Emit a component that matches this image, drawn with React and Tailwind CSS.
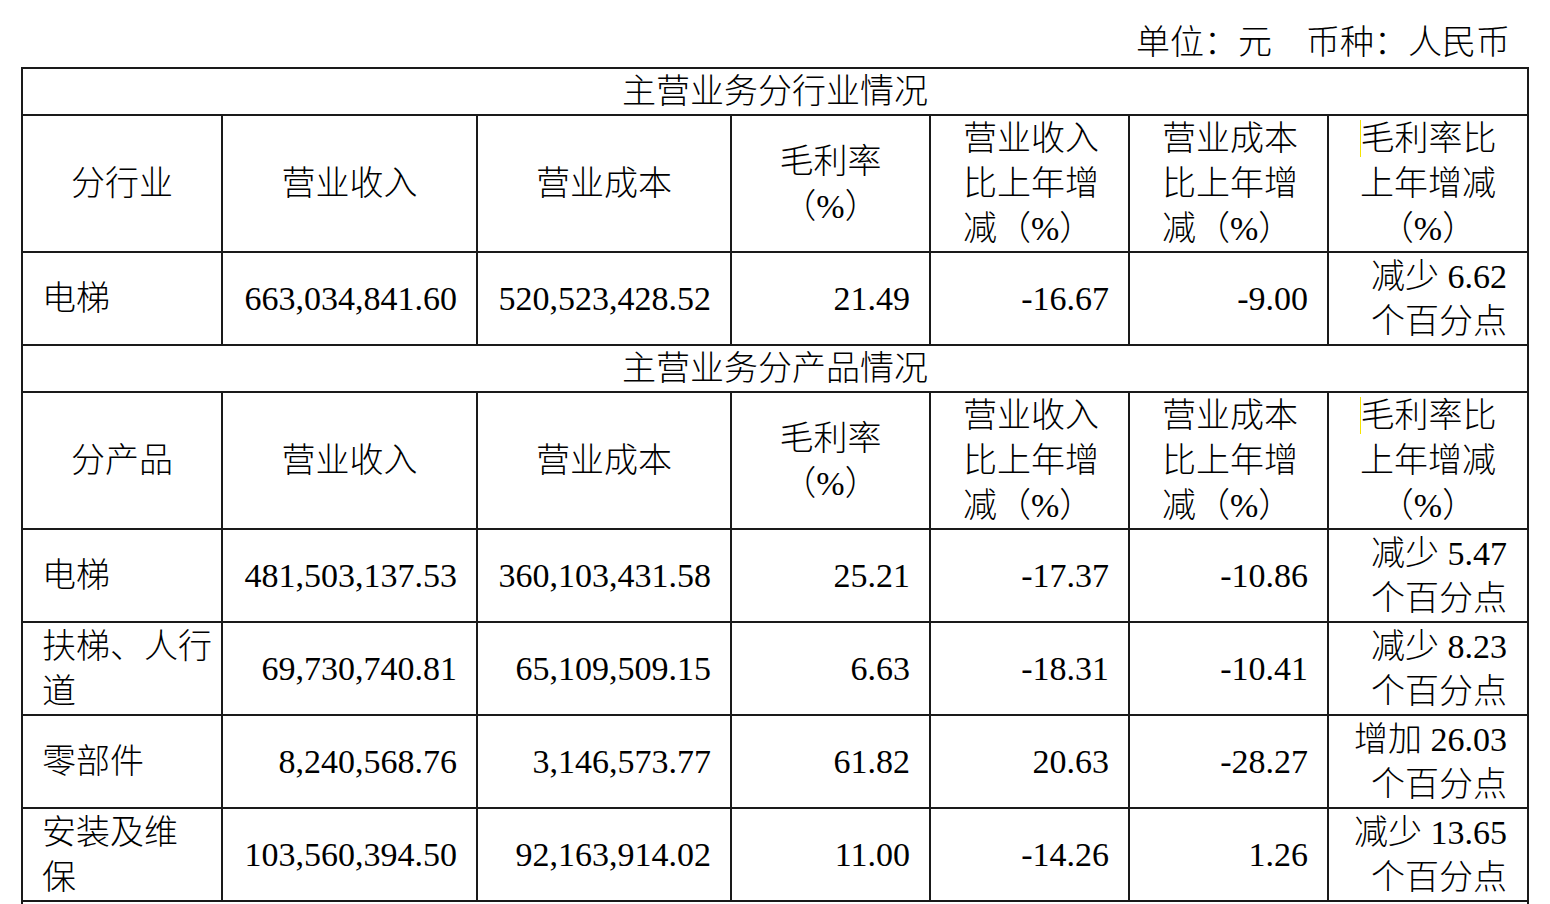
import React from "react";

const industryRows = [
  { name: ["电梯"], rev: "663,034,841.60", cost: "520,523,428.52", gm: "21.49", revChg: "-16.67", costChg: "-9.00", gmChg: ["减少 6.62", "个百分点"] },
];

const productRows = [
  { name: ["电梯"], rev: "481,503,137.53", cost: "360,103,431.58", gm: "25.21", revChg: "-17.37", costChg: "-10.86", gmChg: ["减少 5.47", "个百分点"] },
  { name: ["扶梯、人行", "道"], rev: "69,730,740.81", cost: "65,109,509.15", gm: "6.63", revChg: "-18.31", costChg: "-10.41", gmChg: ["减少 8.23", "个百分点"] },
  { name: ["零部件"], rev: "8,240,568.76", cost: "3,146,573.77", gm: "61.82", revChg: "20.63", costChg: "-28.27", gmChg: ["增加 26.03", "个百分点"] },
  { name: ["安装及维", "保"], rev: "103,560,394.50", cost: "92,163,914.02", gm: "11.00", revChg: "-14.26", costChg: "1.26", gmChg: ["减少 13.65", "个百分点"] },
];

const cell = "border-2 border-[#1a1a1a] p-0 align-middle";

const TitleRow = ({ children }) => (
  <tr>
    <td colSpan={7} className={`${cell} h-[47px] text-center`}>{children}</td>
  </tr>
);

const HeaderRow = ({ first }) => (
  <tr>
    <td className={`${cell} h-[137px] text-center`}>{first}</td>
    <td className={`${cell} text-center`}>营业收入</td>
    <td className={`${cell} text-center`}>营业成本</td>
    <td className={`${cell} text-center`}>
      <div>毛利率</div>
      <div>（%）</div>
    </td>
    <td className={`${cell} pl-[32px] text-left`}>
      <div>营业收入</div>
      <div>比上年增</div>
      <div>减（%）</div>
    </td>
    <td className={`${cell} pl-[32px] text-left`}>
      <div>营业成本</div>
      <div>比上年增</div>
      <div>减（%）</div>
    </td>
    <td className={`${cell} text-center`}>
      <div>
        <span className="border-l border-[#f5e400]">毛利率比</span>
      </div>
      <div>上年增减</div>
      <div>（%）</div>
    </td>
  </tr>
);

const DataRow = ({ row }) => (
  <tr>
    <td className={`${cell} h-[93px] pl-[19px] text-left`}>
      {row.name.map((n) => (
        <div key={n} className="whitespace-nowrap">{n}</div>
      ))}
    </td>
    <td className={`${cell} pr-[19px] text-right`}>{row.rev}</td>
    <td className={`${cell} pr-[19px] text-right`}>{row.cost}</td>
    <td className={`${cell} pr-[19px] text-right`}>{row.gm}</td>
    <td className={`${cell} pr-[19px] text-right`}>{row.revChg}</td>
    <td className={`${cell} pr-[19px] text-right`}>{row.costChg}</td>
    <td className={`${cell} pr-[20px] text-right`}>
      {row.gmChg.map((t) => (
        <div key={t} className="whitespace-nowrap">{t}</div>
      ))}
    </td>
  </tr>
);

export default function App() {
  return (
    <div className="h-[904px] overflow-hidden bg-white text-black text-[34px] leading-[45px] font-light [font-family:'Liberation_Serif','Noto_Sans_CJK_SC',serif]">
      {/* unit line */}
      <div className="flex h-[67px] items-end justify-end pb-[2px] pr-[40px]">
        <span className="whitespace-pre">单位：元　币种：人民币</span>
      </div>

      <div className="pl-[21px]">
        <table className="w-[1508px] table-fixed border-collapse">
          <colgroup>
            <col className="w-[200px]" />
            <col className="w-[255px]" />
            <col className="w-[254px]" />
            <col className="w-[199px]" />
            <col className="w-[199px]" />
            <col className="w-[199px]" />
            <col className="w-[200px]" />
          </colgroup>
          <tbody>
            <TitleRow>主营业务分行业情况</TitleRow>
            <HeaderRow first="分行业" />
            {industryRows.map((r) => (
              <DataRow key={r.rev} row={r} />
            ))}
            <TitleRow>主营业务分产品情况</TitleRow>
            <HeaderRow first="分产品" />
            {productRows.map((r) => (
              <DataRow key={r.rev} row={r} />
            ))}
            <tr>
              <td colSpan={7} className={`${cell} h-[60px]`}></td>
            </tr>
          </tbody>
        </table>
      </div>
    </div>
  );
}
